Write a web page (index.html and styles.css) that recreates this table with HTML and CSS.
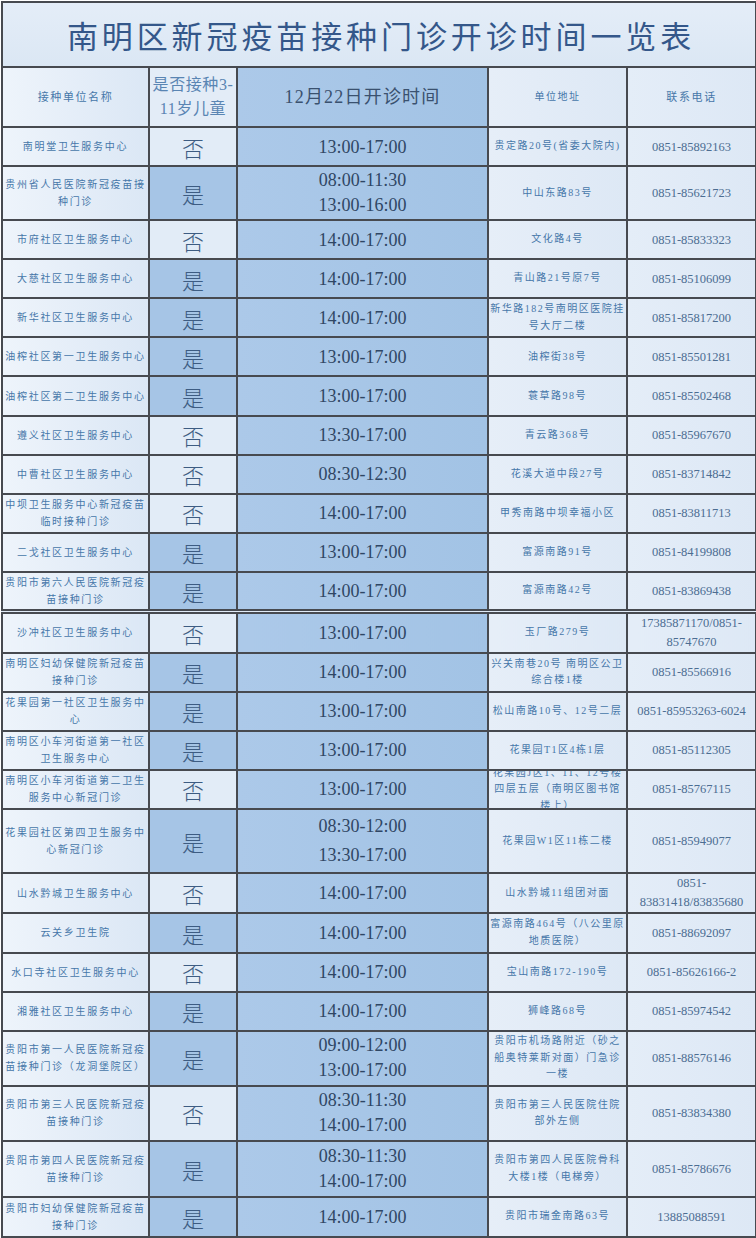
FILE: index.html
```html
<!DOCTYPE html>
<html lang="zh-CN">
<head>
<meta charset="utf-8">
<title>南明区新冠疫苗接种门诊开诊时间一览表</title>
<link rel="stylesheet" href="styles.css">
</head>
<body>
<table class="sheet">
  <colgroup>
    <col class="c-name"><col class="c-kid"><col class="c-time"><col class="c-addr"><col class="c-tel">
  </colgroup>
  <tr class="title-row"><td colspan="5" class="title">南明区新冠疫苗接种门诊开诊时间一览表</td></tr>
  <tr class="head-row">
    <td class="name hd">接种单位名称</td>
    <td class="kid-hd">是否接种3-<br>11岁儿童</td>
    <td class="time time-hd">12月22日开诊时间</td>
    <td class="addr hd">单位地址</td>
    <td class="tel hd">联系电话</td>
  </tr>
  <tr class="std"><td class="name">南明堂卫生服务中心</td><td class="no">否</td><td class="time">13:00-17:00</td><td class="addr">贵定路20号(省委大院内)</td><td class="tel">0851-85892163</td></tr>
  <tr class="h54"><td class="name">贵州省人民医院新冠疫苗接<br>种门诊</td><td class="yes">是</td><td class="time two">08:00-11:30<br>13:00-16:00</td><td class="addr">中山东路83号</td><td class="tel">0851-85621723</td></tr>
  <tr class="std"><td class="name">市府社区卫生服务中心</td><td class="no">否</td><td class="time">14:00-17:00</td><td class="addr">文化路4号</td><td class="tel">0851-85833323</td></tr>
  <tr class="std"><td class="name">大慈社区卫生服务中心</td><td class="yes">是</td><td class="time">14:00-17:00</td><td class="addr">青山路21号原7号</td><td class="tel">0851-85106099</td></tr>
  <tr class="std"><td class="name">新华社区卫生服务中心</td><td class="yes">是</td><td class="time">14:00-17:00</td><td class="addr">新华路182号南明区医院挂<br>号大厅二楼</td><td class="tel">0851-85817200</td></tr>
  <tr class="std"><td class="name">油榨社区第一卫生服务中心</td><td class="yes">是</td><td class="time">13:00-17:00</td><td class="addr">油榨街38号</td><td class="tel">0851-85501281</td></tr>
  <tr class="std"><td class="name">油榨社区第二卫生服务中心</td><td class="yes">是</td><td class="time">13:00-17:00</td><td class="addr">蓑草路98号</td><td class="tel">0851-85502468</td></tr>
  <tr class="std"><td class="name">遵义社区卫生服务中心</td><td class="no">否</td><td class="time">13:30-17:00</td><td class="addr">青云路368号</td><td class="tel">0851-85967670</td></tr>
  <tr class="std"><td class="name">中曹社区卫生服务中心</td><td class="no">否</td><td class="time">08:30-12:30</td><td class="addr">花溪大道中段27号</td><td class="tel">0851-83714842</td></tr>
  <tr class="std"><td class="name">中坝卫生服务中心新冠疫苗<br>临时接种门诊</td><td class="no">否</td><td class="time">14:00-17:00</td><td class="addr">甲秀南路中坝幸福小区</td><td class="tel">0851-83811713</td></tr>
  <tr class="std"><td class="name">二戈社区卫生服务中心</td><td class="yes">是</td><td class="time">13:00-17:00</td><td class="addr">富源南路91号</td><td class="tel">0851-84199808</td></tr>
  <tr class="std"><td class="name">贵阳市第六人民医院新冠疫<br>苗接种门诊</td><td class="yes">是</td><td class="time">14:00-17:00</td><td class="addr">富源南路42号</td><td class="tel">0851-83869438</td></tr>
  <tr class="split"><td class="name">沙冲社区卫生服务中心</td><td class="no">否</td><td class="time">13:00-17:00</td><td class="addr">玉厂路279号</td><td class="tel tel2">17385871170/0851-<br>85747670</td></tr>
  <tr class="std"><td class="name">南明区妇幼保健院新冠疫苗<br>接种门诊</td><td class="yes">是</td><td class="time">14:00-17:00</td><td class="addr">兴关南巷20号 南明区公卫<br>综合楼1楼</td><td class="tel">0851-85566916</td></tr>
  <tr class="std"><td class="name">花果园第一社区卫生服务中<br>心</td><td class="yes">是</td><td class="time">13:00-17:00</td><td class="addr">松山南路10号、12号二层</td><td class="tel">0851-85953263-6024</td></tr>
  <tr class="std"><td class="name">南明区小车河街道第一社区<br>卫生服务中心</td><td class="yes">是</td><td class="time">13:00-17:00</td><td class="addr">花果园T1区4栋1层</td><td class="tel">0851-85112305</td></tr>
  <tr class="std"><td class="name">南明区小车河街道第二卫生<br>服务中心新冠门诊</td><td class="no">否</td><td class="time">13:00-17:00</td><td class="addr"><div class="clip">花果园J区1、11、12号楼<br>四层五层（南明区图书馆<br>楼上）</div></td><td class="tel">0851-85767115</td></tr>
  <tr class="h64"><td class="name">花果园社区第四卫生服务中<br>心新冠门诊</td><td class="yes">是</td><td class="time two wide">08:30-12:00<br>13:30-17:00</td><td class="addr">花果园W1区11栋二楼</td><td class="tel">0851-85949077</td></tr>
  <tr class="std"><td class="name">山水黔城卫生服务中心</td><td class="no">否</td><td class="time">14:00-17:00</td><td class="addr">山水黔城11组团对面</td><td class="tel tel2">0851-<br>83831418/83835680</td></tr>
  <tr class="std"><td class="name">云关乡卫生院</td><td class="yes">是</td><td class="time">14:00-17:00</td><td class="addr">富源南路464号（八公里原<br>地质医院）</td><td class="tel">0851-88692097</td></tr>
  <tr class="std"><td class="name">水口寺社区卫生服务中心</td><td class="no">否</td><td class="time">14:00-17:00</td><td class="addr">宝山南路172-190号</td><td class="tel">0851-85626166-2</td></tr>
  <tr class="std"><td class="name">湘雅社区卫生服务中心</td><td class="yes">是</td><td class="time">14:00-17:00</td><td class="addr">狮峰路68号</td><td class="tel">0851-85974542</td></tr>
  <tr class="h55"><td class="name">贵阳市第一人民医院新冠疫<br>苗接种门诊（龙洞堡院区）</td><td class="yes">是</td><td class="time two">09:00-12:00<br>13:00-17:00</td><td class="addr">贵阳市机场路附近（砂之<br>船奥特莱斯对面）门急诊<br>一楼</td><td class="tel">0851-88576146</td></tr>
  <tr class="h55"><td class="name">贵阳市第三人民医院新冠疫<br>苗接种门诊</td><td class="no">否</td><td class="time two">08:30-11:30<br>14:00-17:00</td><td class="addr">贵阳市第三人民医院住院<br>部外左侧</td><td class="tel">0851-83834380</td></tr>
  <tr class="h56"><td class="name">贵阳市第四人民医院新冠疫<br>苗接种门诊</td><td class="yes">是</td><td class="time two">08:30-11:30<br>14:00-17:00</td><td class="addr">贵阳市第四人民医院骨科<br>大楼1楼（电梯旁）</td><td class="tel">0851-85786676</td></tr>
  <tr class="last"><td class="name">贵阳市妇幼保健院新冠疫苗<br>接种门诊</td><td class="yes">是</td><td class="time">14:00-17:00</td><td class="addr">贵阳市瑞金南路63号</td><td class="tel">13885088591</td></tr>
</table>
</body>
</html>
```

FILE: styles.css
```css
html, body {
  margin: 0;
  padding: 0;
  background: #ffffff;
}

body {
  padding: 1px 0 0 1px;
  font-family: "Liberation Serif", "Noto Sans CJK SC", serif;
}

.sheet {
  width: 754px;
  border-collapse: collapse;
  table-layout: fixed;
  background: #e0eaf6;
}

.c-name { width: 147px; }
.c-kid { width: 88px; }
.c-time { width: 251px; }
.c-addr { width: 139px; }
.c-tel { width: 129px; }

.sheet td {
  border: 2px solid #474a50;
  padding: 0;
  text-align: center;
  vertical-align: middle;
  white-space: nowrap;
  overflow: hidden;
}

.title-row { height: 65px; }
.head-row { height: 60px; }
.std { height: 39.1px; }
.split { height: 41.5px; }
.h54 { height: 54px; }
.h55 { height: 55px; }
.h56 { height: 56px; }
.h64 { height: 64.5px; }
.last { height: 40px; }

.split td {
  border-top: 5px double #474a50;
}

.title {
  background: linear-gradient(to bottom, #e4edf8, #dbe7f4);
  font-family: "Noto Sans CJK SC", sans-serif;
  font-size: 31px;
  letter-spacing: 3.9px;
  padding-left: 4px !important;
  color: #34578a;
  font-weight: 400;
}

.name {
  background: linear-gradient(to right, #eef4fb, #dbe7f5);
  font-family: "Liberation Serif", "Noto Sans CJK SC", serif;
  font-size: 10px;
  letter-spacing: 1.7px;
  line-height: 17px;
  color: #4677a9;
}

.hd {
  font-size: 11px;
  letter-spacing: 1.6px;
}

.kid-hd {
  background: #e3ecf7;
  font-family: "Liberation Serif", "Noto Sans CJK SC", serif;
  font-size: 16px;
  line-height: 24px;
  letter-spacing: 0.6px;
  color: #5a85b3;
}

.yes, .no {
  font-family: "Noto Sans CJK SC", sans-serif;
  font-size: 22px;
  line-height: 30px;
  font-weight: 300;
  color: #3d5c82;
}

.yes { background: #a6c5e6; }
.no { background: #e2ecf7; }

.time {
  background: linear-gradient(to right, #acc9e9, #a2c3e5);
  font-family: "Liberation Serif", "Noto Sans CJK SC", serif;
  font-size: 18px;
  line-height: 24px;
  color: #2f4664;
}

.time.two { line-height: 25px; }
.time.wide { line-height: 29px; }

.time-hd {
  font-size: 18px;
  letter-spacing: 1.2px;
  color: #3a516f;
}

.addr {
  background: linear-gradient(to right, #e6eef8, #dde8f5);
  font-family: "Liberation Serif", "Noto Sans CJK SC", serif;
  font-size: 10px;
  letter-spacing: 1.5px;
  line-height: 16.5px;
  color: #4677a9;
}

.clip {
  height: 37px;
  display: flex;
  align-items: center;
  justify-content: center;
  overflow: hidden;
}

.tel {
  background: linear-gradient(to right, #e4edf8, #dde8f5);
  font-family: "Liberation Serif", serif;
  font-size: 12.5px;
  line-height: 18px;
  color: #4c6d92;
}

.tel.hd {
  font-family: "Liberation Serif", "Noto Sans CJK SC", serif;
  font-size: 11px;
  color: #4677a9;
}

.tel2 { line-height: 19px; }
```
